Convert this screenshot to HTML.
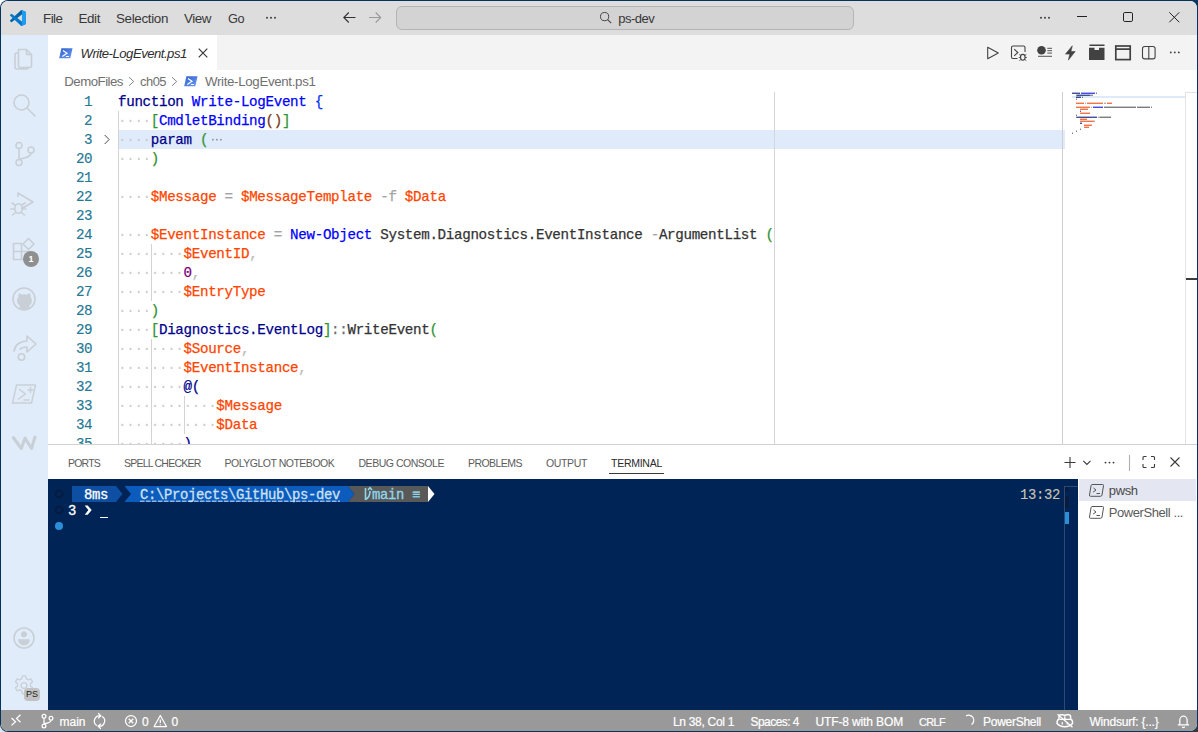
<!DOCTYPE html>
<html>
<head>
<meta charset="utf-8">
<title>Write-LogEvent.ps1 - ps-dev - Visual Studio Code</title>
<style>
*{box-sizing:border-box;margin:0;padding:0}
html,body{width:1198px;height:732px;overflow:hidden;background:#0a365f;font-family:"Liberation Sans",sans-serif;}
.corner{position:absolute;width:9px;height:9px}
#win{position:absolute;left:0;top:0;width:1198px;height:732px;background:#04335c;border-radius:8px;overflow:hidden}
#inner{position:absolute;left:1px;top:1px;width:1196px;height:730px;border-radius:7px;overflow:hidden;background:#fff}
.abs{position:absolute}
svg{position:absolute;overflow:visible}
.tx{position:absolute;line-height:20px;white-space:nowrap}
/* title bar */
#title{left:0;top:0;width:1196px;height:34px;background:#dddddd}
#search{left:395px;top:5px;width:458px;height:24px;border:1px solid #b4b4b4;border-radius:6px;background:#d3d3d3}
/* activity bar */
#act{left:0;top:34px;width:47px;height:675px;background:#e0ecf9}
/* tabs */
#tabs{left:47px;top:34px;width:1149px;height:35px;background:#f3f3f3}
#tab{left:0;top:0;width:169px;height:35px;background:#fff}
#crumbs{left:47px;top:69px;width:1149px;height:22px;background:#fff}
/* editor */
#ed{left:47px;top:91px;width:1149px;height:352px;background:#fff;overflow:hidden}
.ln{position:absolute;left:0;width:1149px;height:19px;font-family:"Liberation Mono",monospace;font-size:14.2px;letter-spacing:-0.32px;line-height:19px;padding-top:0.5px;white-space:pre;color:#1f1f1f;-webkit-text-stroke:0.25px currentColor}
.no{position:absolute;left:0;width:44.3px;text-align:right;color:#237893;-webkit-text-stroke:0.15px currentColor}
.cd{position:absolute;left:70px}
.k{color:#00008b}.f{color:#0000ff}.v{color:#ff4500}.b1{color:#0431fa}.b2{color:#319331}.b3{color:#7b3814}.t{color:#00008b}.o{color:#a4a4a4}.o2{color:#707070}.c{color:#bcbcbc}.n{color:#800080}.p{color:#333}
.guide{width:1px;background:#d3d3d3}
.fold{color:#777;-webkit-text-stroke:0}
.ws{color:#cacaca;-webkit-text-stroke:0}
/* panel */
#panel{left:47px;top:443px;width:1149px;height:266px;background:#fff;border-top:1px solid #d2d2d2}
#term{left:0;top:34px;width:1030px;height:231px;background:#012456;overflow:hidden}
.tl{position:absolute;font-family:"Liberation Mono",monospace;font-size:13.9px;letter-spacing:-0.34px;line-height:16px;height:16px;padding-top:0.6px;white-space:pre;color:#f0f0f0;-webkit-text-stroke:0.3px currentColor}
#tlist{left:1030px;top:34px;width:119px;height:231px;background:#fff}
/* status */
#status{left:0;top:709px;width:1196px;height:21px;background:#999999}
</style>
</head>
<body>
<div class="corner" style="left:0;top:0;background:#fff"></div>
<div class="corner" style="left:0;bottom:0;background:#dfe6ee"></div>
<div class="corner" style="right:0;bottom:0;background:#3a3a3a"></div>
<div id="win"><div id="inner">
<!-- ================= TITLE BAR ================= -->
<div id="title" class="abs">
  <!-- vscode logo -->
  <svg style="left:9px;top:9px" width="16" height="16" viewBox="0 0 100 100">
    <path d="M96.46 10.8 75.86.9a6.23 6.23 0 0 0-7.1 1.2L1.34 63.6a4.17 4.17 0 0 0 0 6.16l5.5 5a4.17 4.17 0 0 0 5.33.24L93.4 13.4a4.14 4.14 0 0 1 6.6 3.3v-.24a6.25 6.25 0 0 0-3.54-5.64z" fill="#0065a9"/>
    <path d="M96.46 89.2 75.86 99.1a6.23 6.23 0 0 1-7.1-1.2L1.34 36.4a4.17 4.17 0 0 1 0-6.16l5.5-5a4.17 4.17 0 0 1 5.33-.24L93.4 86.6a4.14 4.14 0 0 0 6.6-3.3v.24a6.25 6.25 0 0 1-3.54 5.64z" fill="#007acc"/>
    <path d="M75.86 99.1a6.23 6.23 0 0 1-7.1-1.2c2.3 2.3 6.25.67 6.25-2.6V4.7c0-3.26-3.95-4.9-6.26-2.6a6.23 6.23 0 0 1 7.1-1.2l20.6 9.9A6.25 6.25 0 0 1 100 16.44v67.12a6.25 6.25 0 0 1-3.54 5.63z" fill="#1f9cf0"/>
  </svg>
  <!-- menu overflow dots -->
  <svg style="left:0;top:0" width="1196" height="34" viewBox="0 0 1196 34">
    <g fill="#333"><circle cx="266" cy="16.7" r="0.95"/><circle cx="270" cy="16.7" r="0.95"/><circle cx="274" cy="16.7" r="0.95"/></g>
    <!-- nav arrows -->
    <path d="M354.5 16.5H343M347.8 11.5l-5 5 5 5" fill="none" stroke="#333" stroke-width="1.1"/>
    <path d="M368 16.5h11.5M374.7 11.5l5 5-5 5" fill="none" stroke="#9a9a9a" stroke-width="1.1"/>
    <!-- window controls -->
    <g fill="#333"><circle cx="1040" cy="16.8" r="0.95"/><circle cx="1044" cy="16.8" r="0.95"/><circle cx="1048" cy="16.8" r="0.95"/></g>
    <path d="M1076 15.5h10" stroke="#222" stroke-width="1" fill="none"/>
    <rect x="1122.5" y="11.5" width="9" height="9" rx="1.3" fill="none" stroke="#222" stroke-width="1"/>
    <path d="M1168.3 11.3l10 10M1178.3 11.3l-10 10" stroke="#222" stroke-width="1" fill="none"/>
  </svg>
  <div id="search" class="abs"></div>
  <svg style="left:598px;top:10px" width="13" height="13" viewBox="0 0 13 13"><circle cx="5.6" cy="5.6" r="4.1" fill="none" stroke="#444" stroke-width="1"/><path d="M8.6 8.6l3.6 3.6" stroke="#444" stroke-width="1.1"/></svg>
</div>

<!-- ================= ACTIVITY BAR ================= -->
<div id="act" class="abs">
<svg style="left:0;top:0" width="47" height="675" viewBox="0 0 47 675" fill="none" stroke="#c9cfd6" stroke-width="1.6" stroke-linejoin="round" stroke-linecap="round">
  <!-- files (y center 59-35=24) -->
  <path d="M17.5 14.5h8l5 5v11.5a1.5 1.5 0 0 1-1.5 1.5h-10a1.5 1.5 0 0 1-1.5-1.5z M25.5 14.5v5h5 M17.5 18h-2a1.5 1.5 0 0 0-1.5 1.5v13a1.5 1.5 0 0 0 1.5 1.5h10a1.5 1.5 0 0 0 1.5-1.5v-0.5"/>
  <!-- search (y center 106-35=71) -->
  <circle cx="20.5" cy="67.5" r="7.5"/><path d="M26 73l8 8"/>
  <!-- scm (y center 154-35=119) -->
  <circle cx="18" cy="110.5" r="3"/><circle cx="18" cy="127.5" r="3"/><circle cx="30" cy="115" r="3"/><path d="M18 113.5v11 M30 118c0 4-6 5-12 6.500"/>
  <!-- debug (y center 203-35=168) -->
  <path d="M17 161.500v-3.500l15 9-11 6.500"/><ellipse cx="17.500" cy="173.500" rx="3.700" ry="4.800"/><path d="M14 170l-3-2 M21 170l3-2 M13.500 174h-3.500 M21.500 174h3.500 M14.500 177.500l-3 2.500 M20.500 177.500l3 2.500"/>
  <!-- extensions (y center 251-35=216) -->
  <path d="M12.500 208.500h8v16h-8z M12.500 216.500h16v8h-16 M28.500 216.500v8"/><path d="M27.500 203.500l5.500 5.500-5.500 5.500-5.500-5.500z"/>
  <!-- github (y center 299-35=264) -->
  <circle cx="23" cy="264" r="11"/>
  <path d="M19 274v-3.500c-1.500-1-2.500-2.500-2.500-5 0-1.500.5-2.700 1.300-3.600-.2-1 0-2.400.400-3.200 1.200.1 2.300.7 3.100 1.300a9 9 0 0 1 4.400 0c.8-.6 1.900-1.200 3.100-1.300.4.800.6 2.200.4 3.200.8.900 1.300 2.100 1.300 3.600 0 2.500-1 4-2.500 5v3.500z" fill="#c9cfd6" stroke-width="0.8"/>
  <!-- live share (y center 346-35=311) -->
  <path d="M13 316c1-6 6-10 13-10v-5l9 8-9 8v-5c-3 0-5 .5-7 2"/><circle cx="20.500" cy="322" r="3.200"/>
  <!-- powershell (y center 394-35=359) -->
  <path d="M15.500 350h19l-4 18h-19z" stroke-width="1.400"/><path d="M18.500 354.500l6 4.500-7 5 M23 365h5 M29.500 352.500v5 M27 355h5" stroke-width="1.400"/>
  <!-- windsurf W (y center 442-35=407) -->
  <path d="M12.300 402.500l8 11 3.700-10.500 6.500 10.500 3.500-11.500" stroke-width="3"/>
  <!-- account (y center 638-35=603) -->
  <circle cx="23" cy="603" r="10"/><circle cx="23" cy="599.300" r="2.600" fill="#c9cfd6" stroke-width="1"/><path d="M17.800 604.800h10.400c0 3.500-2.300 5.200-5.200 5.200s-5.200-1.700-5.200-5.200z" fill="#c9cfd6" stroke-width="1"/>
  <!-- settings gear (y center 685-35=650) -->
  <g transform="translate(23 650.500) scale(0.83) translate(-22 -650)"><circle cx="22" cy="650" r="3.500"/>
  <path d="M20 638.500h4l.7 3.300 2.400 1.400 3.200-1.100 2 3.500-2.500 2.200v2.800l2.500 2.200-2 3.500-3.200-1.100-2.400 1.400-.7 3.300h-4l-.7-3.300-2.400-1.400-3.200 1.100-2-3.500 2.500-2.200v-2.800l-2.500-2.200 2-3.500 3.200 1.100 2.400-1.400z"/></g>
</svg>
  <!-- extension badge -->
  <div class="abs" style="left:22px;top:216px;width:16px;height:16px;border-radius:8px;background:#8f8f8f;color:#fff;font-size:9px;line-height:16px;text-align:center;font-weight:bold">1</div>
  <!-- PS profile badge -->
  <div class="abs" style="left:23px;top:653px;width:16px;height:13px;border-radius:4px;background:#c2c2c2;color:#222;font-size:9px;line-height:13px;text-align:center">PS</div>
</div>

<!-- ================= TABS ================= -->
<div id="tabs" class="abs">
  <div id="tab" class="abs">
    <svg style="left:11px;top:12.5px" width="14" height="10.5" viewBox="0 0 15 11" preserveAspectRatio="none"><defs><linearGradient id="psg" x1="0" y1="0" x2="1" y2="1"><stop offset="0" stop-color="#2e5fcf"/><stop offset="1" stop-color="#6c9bef"/></linearGradient></defs><path d="M2.600 0.300h11.900l-2.400 10.400h-11.900z" fill="url(#psg)"/><path d="M4.200 2.600l4.300 2.900-5 3.300" fill="none" stroke="#fff" stroke-width="1.300"/><path d="M7.300 9h3.400" stroke="#fff" stroke-width="1.100"/></svg>
    <svg style="left:150px;top:13px" width="10" height="10" viewBox="0 0 10 10"><path d="M0.700 0.700l8.600 8.600M9.300 0.700l-8.600 8.600" stroke="#333" stroke-width="1.100" fill="none"/></svg>
  </div>
  <!-- editor actions -->
  <svg style="left:0;top:0" width="1149" height="35" viewBox="48 35 1149 35" fill="none" stroke="#424242" stroke-width="1.100">
    <!-- run -->
    <path d="M987.700 47.300v11.400l10.600-5.700z" stroke-linejoin="round"/>
    <!-- debug terminal -->
    <path d="M1017.500 58.500h-4.500a1.500 1.500 0 0 1-1.500-1.500v-9.500a1.500 1.500 0 0 1 1.500-1.500h10.500a1.500 1.500 0 0 1 1.500 1.500v4.500"/>
    <path d="M1014.200 49.200l3.600 3.300-3.600 3.300"/>
    <ellipse cx="1022.800" cy="57.300" rx="2.300" ry="2.900"/><path d="M1019.300 54.500l1.500 1 M1026.300 54.500l-1.500 1 M1018.800 57.500h1.700 M1026.800 57.500h-1.700 M1019.300 60.500l1.500-1 M1026.300 60.500l-1.500-1" stroke-width="0.900"/>
    <!-- circle + lines -->
    <circle cx="1041.500" cy="50.300" r="4.300" fill="#424242" stroke="none"/><path d="M1047.300 48.300h4.700 M1047.300 50.700h4.700 M1047.300 53.100h4.700 M1038 56.300h14" stroke-width="0.9"/>
    <!-- lightning -->
    <path d="M1072.300 45.800l-6.800 8.300h4.300l-1.400 6 6.800-8.600h-4.300z" fill="#424242" stroke-width="0.600"/>
    <!-- filled archive box -->
    <path d="M1089.500 45.300h15" stroke-width="1.600"/><path d="M1089 47.800h5.500v2.200h4.500v-2.200h5.500v12.200h-15.500z" fill="#424242" stroke="none"/>
    <!-- window -->
    <rect x="1115.800" y="46" width="14.400" height="13.600" stroke-width="1.700"/><path d="M1115.800 49.200h14.400" stroke-width="1.800"/>
    <!-- split -->
    <rect x="1142.500" y="46.500" width="12.600" height="12.400" rx="2.200"/><path d="M1148.800 46.500v12.400"/>
    <!-- more -->
    <g fill="#424242" stroke="none"><circle cx="1170.800" cy="52.400" r="0.950"/><circle cx="1174.800" cy="52.400" r="0.950"/><circle cx="1178.800" cy="52.400" r="0.950"/></g>
  </svg>
</div>
<div id="crumbs" class="abs">
  <svg style="left:0;top:0" width="1149" height="22" viewBox="48 70 1149 22" fill="none" stroke="#858585" stroke-width="1">
    <path d="M129 77.200l4.700 4.300-4.700 4.300 M172 77.200l4.700 4.300-4.700 4.300"/>
  </svg>
  <svg style="left:136px;top:6px" width="14" height="10.5" viewBox="0 0 15 11" preserveAspectRatio="none"><path d="M2.600 0.300h11.900l-2.400 10.400h-11.900z" fill="url(#psg)"/><path d="M4.200 2.600l4.300 2.900-5 3.300" fill="none" stroke="#fff" stroke-width="1.300"/><path d="M7.300 9h3.400" stroke="#fff" stroke-width="1.100"/></svg>
</div>
<!-- ================= EDITOR ================= -->
<div id="ed" class="abs">
<div class="abs" style="left:70px;top:38px;width:947px;height:19px;background:#dfebfa"></div>
<div class="abs guide" style="left:70px;top:19px;height:340px"></div>
<div class="abs guide" style="left:103px;top:152px;height:57px"></div>
<div class="abs guide" style="left:103px;top:247px;height:110px"></div>
<div class="abs guide" style="left:136px;top:304px;height:38px"></div>
<div class="abs" style="left:726px;top:0;width:1px;height:352px;background:#d6d6d6"></div>
<svg style="left:54px;top:42px" width="10" height="11" viewBox="0 0 10 11"><path d="M2.700 1l4.400 4.500-4.400 4.500" fill="none" stroke="#4a4a4a" stroke-width="1"/></svg>
<svg style="left:0;top:0" width="200" height="60" viewBox="0 0 200 60"><g fill="#8c8c8c"><circle cx="164.9" cy="47.7" r="0.85"/><circle cx="168.9" cy="47.7" r="0.85"/><circle cx="172.9" cy="47.7" r="0.85"/></g></svg>
<div class="ln" style="top:0px"><span class="no">1</span><span class="cd"><span class="k">function</span> <span class="f">Write-LogEvent</span> <span class="b1">{</span></span></div>
<div class="ln" style="top:19px"><span class="no">2</span><span class="cd"><span class="ws">····</span><span class="b2">[</span><span class="f">CmdletBinding</span><span class="b3">()</span><span class="b2">]</span></span></div>
<div class="ln hl" style="top:38px"><span class="no">3</span><span class="cd"><span class="ws">····</span><span class="k">param</span> <span class="b2">(</span></span></div>
<div class="ln" style="top:57px"><span class="no">20</span><span class="cd"><span class="ws">····</span><span class="b2">)</span></span></div>
<div class="ln" style="top:76px"><span class="no">21</span><span class="cd"></span></div>
<div class="ln" style="top:95px"><span class="no">22</span><span class="cd"><span class="ws">····</span><span class="v">$Message</span> <span class="o">=</span> <span class="v">$MessageTemplate</span> <span class="o">-f</span> <span class="v">$Data</span></span></div>
<div class="ln" style="top:114px"><span class="no">23</span><span class="cd"></span></div>
<div class="ln" style="top:133px"><span class="no">24</span><span class="cd"><span class="ws">····</span><span class="v">$EventInstance</span> <span class="o">=</span> <span class="f">New-Object</span> <span class="p">System.Diagnostics.EventInstance</span> <span class="o">-</span><span class="p">ArgumentList</span> <span class="b2">(</span></span></div>
<div class="ln" style="top:152px"><span class="no">25</span><span class="cd"><span class="ws">········</span><span class="v">$EventID</span><span class="c">,</span></span></div>
<div class="ln" style="top:171px"><span class="no">26</span><span class="cd"><span class="ws">········</span><span class="n">0</span><span class="c">,</span></span></div>
<div class="ln" style="top:190px"><span class="no">27</span><span class="cd"><span class="ws">········</span><span class="v">$EntryType</span></span></div>
<div class="ln" style="top:209px"><span class="no">28</span><span class="cd"><span class="ws">····</span><span class="b2">)</span></span></div>
<div class="ln" style="top:228px"><span class="no">29</span><span class="cd"><span class="ws">····</span><span class="b2">[</span><span class="t">Diagnostics.EventLog</span><span class="b2">]</span><span class="o2">::</span><span class="p">WriteEvent</span><span class="b2">(</span></span></div>
<div class="ln" style="top:247px"><span class="no">30</span><span class="cd"><span class="ws">········</span><span class="v">$Source</span><span class="c">,</span></span></div>
<div class="ln" style="top:266px"><span class="no">31</span><span class="cd"><span class="ws">········</span><span class="v">$EventInstance</span><span class="c">,</span></span></div>
<div class="ln" style="top:285px"><span class="no">32</span><span class="cd"><span class="ws">········</span><span class="k">@(</span></span></div>
<div class="ln" style="top:304px"><span class="no">33</span><span class="cd"><span class="ws">············</span><span class="v">$Message</span></span></div>
<div class="ln" style="top:323px"><span class="no">34</span><span class="cd"><span class="ws">············</span><span class="v">$Data</span></span></div>
<div class="ln" style="top:342px"><span class="no">35</span><span class="cd"><span class="ws">········</span><span class="k">)</span></span></div>
<!-- minimap -->
<div class="abs" style="left:1014px;top:0;width:1px;height:352px;background:#cfcfcf"></div>
<div class="abs" style="left:1017px;top:0;width:120px;height:352px;background:#fff"></div>
<div class="abs" style="left:1024px;top:4px;width:113px;height:2px;background:#dfeaf8"></div>
<svg style="left:1024px;top:0" width="100" height="50" viewBox="0 0 100 50">
  <g opacity="0.8">
  <rect x="0" y="0.600" width="8" height="1.350" fill="#0a1a7a"/><rect x="9" y="0.600" width="14" height="1.350" fill="#0a14f0"/><rect x="24" y="0.600" width="1" height="1.350" fill="#555"/>
  <rect x="4" y="2.600" width="1" height="1.350" fill="#319331"/><rect x="5" y="2.600" width="13" height="1.350" fill="#0a1a7a"/><rect x="18" y="2.600" width="3" height="1.350" fill="#777"/>
  <rect x="4" y="4.600" width="5" height="1.350" fill="#0a1a7a"/><rect x="10" y="4.600" width="1" height="1.350" fill="#555"/>
  <rect x="4" y="6.600" width="1" height="1.350" fill="#555"/>
  <rect x="4" y="10.600" width="8" height="1.350" fill="#f04a14"/><rect x="13" y="10.600" width="1" height="1.350" fill="#999"/><rect x="15" y="10.600" width="16" height="1.350" fill="#f04a14"/><rect x="32" y="10.600" width="2" height="1.350" fill="#999"/><rect x="35" y="10.600" width="5" height="1.350" fill="#f04a14"/>
  <rect x="4" y="14.600" width="14" height="1.350" fill="#f04a14"/><rect x="19" y="14.600" width="1" height="1.350" fill="#999"/><rect x="21" y="14.600" width="10" height="1.350" fill="#0a14f0"/><rect x="32" y="14.600" width="32" height="1.350" fill="#555"/><rect x="65" y="14.600" width="13" height="1.350" fill="#555"/><rect x="79" y="14.600" width="1" height="1.350" fill="#555"/>
  <rect x="8" y="16.600" width="8" height="1.350" fill="#f04a14"/>
  <rect x="8" y="18.600" width="1" height="1.350" fill="#7a0a7a"/>
  <rect x="8" y="20.600" width="10" height="1.350" fill="#f04a14"/>
  <rect x="4" y="22.600" width="1" height="1.350" fill="#555"/>
  <rect x="4" y="24.600" width="1" height="1.350" fill="#555"/><rect x="5" y="24.600" width="20" height="1.350" fill="#0a1a7a"/><rect x="26" y="24.600" width="2" height="1.350" fill="#999"/><rect x="28" y="24.600" width="11" height="1.350" fill="#555"/>
  <rect x="8" y="26.600" width="7" height="1.350" fill="#f04a14"/>
  <rect x="8" y="28.600" width="14" height="1.350" fill="#f04a14"/><rect x="22" y="28.600" width="1" height="1.350" fill="#999"/>
  <rect x="8" y="30.600" width="2" height="1.350" fill="#0a1a7a"/>
  <rect x="12" y="32.600" width="8" height="1.350" fill="#f04a14"/>
  <rect x="12" y="34.600" width="5" height="1.350" fill="#f04a14"/>
  <rect x="8" y="36.600" width="1" height="1.350" fill="#555"/>
  <rect x="4" y="38.600" width="1" height="1.350" fill="#555"/>
  <rect x="0" y="40.600" width="1" height="1.350" fill="#555"/>
  </g>
</svg>
<!-- overview ruler -->
<div class="abs" style="left:1137px;top:0;width:12px;height:352px;background:#fff;border-left:1px solid #e3e3e3;border-top:1px solid #e3e3e3"></div>
<div class="abs" style="left:1138px;top:186px;width:11px;height:2px;background:#3c3c3c"></div>
</div>
<!-- ================= PANEL ================= -->
<div id="panel" class="abs">
  <div class="abs" style="left:561px;top:28px;width:55px;height:1px;background:#3a3a3a"></div>
  <svg style="left:0;top:0" width="1149" height="35" viewBox="48 445 1149 35" fill="none" stroke="#3a3a3a" stroke-width="1.100">
    <path d="M1064.500 462.500h11M1070 457v11"/>
    <path d="M1083.300 460.800l3.600 3.600 3.600-3.600"/>
    <g fill="#3a3a3a" stroke="none"><circle cx="1105.500" cy="462.600" r="0.950"/><circle cx="1109.500" cy="462.600" r="0.950"/><circle cx="1113.500" cy="462.600" r="0.950"/></g>
    <path d="M1129.500 455v16" stroke="#b0b0b0"/>
    <path d="M1143 460v-2.500a1 1 0 0 1 1-1h2.500 M1151 456.500h2.500a1 1 0 0 1 1 1v2.500 M1154.500 464v2.500a1 1 0 0 1-1 1h-2.500 M1146.500 467.500h-2.500a1 1 0 0 1-1-1v-2.500"/>
    <path d="M1170.500 457.500l9 9M1179.500 457.500l-9 9"/>
  </svg>
  <div id="term" class="abs">
    <!-- gutter decorations -->
    <svg style="left:0;top:0" width="30" height="60" viewBox="0 0 30 60"><circle cx="11" cy="15" r="3.500" fill="none" stroke="#08193a" stroke-width="1.700"/><circle cx="11" cy="31" r="3.500" fill="none" stroke="#08193a" stroke-width="1.700"/><circle cx="11" cy="47" r="4" fill="#2a8fd8"/></svg>
    <!-- prompt line 1: y 486..502 abs => 486-479=7 -->
    <svg style="left:0;top:7px" width="420" height="16" viewBox="48 0 420 16">
      <path d="M72 0h44l6.500 8-6.500 8h-44z" fill="#0d4fa3"/>
      <path d="M124.500 0h223.500l6.500 8-6.500 8h-223.500l6.500-8z" fill="#0b5cbc"/>
      <path d="M348 0h80v16h-80l6.500-8z" fill="#595959"/>
      <path d="M428 0l6.500 8-6.500 8z" fill="#ffffff"/>
      <!-- git branch glyph -->
      <path d="M365.500 2v12 M365.500 13.500c3-1.500 4.500-4 4.500-8.500 M368 4l2-2.300 2 2.300" fill="none" stroke="#8fd6ea" stroke-width="1.600"/>
      <!-- dashed underline -->
      <path d="M140 15.200h200" stroke="#cfe0f2" stroke-width="1" stroke-dasharray="4.500 1.500" fill="none"/>
    </svg>
    <div class="tl" style="left:36px;top:7px;color:#ffffff">8ms</div>
    <div class="tl" style="left:92px;top:7px;color:#cfe0f2">C:\Projects\GitHub\ps-dev</div>
    <div class="tl" style="left:324px;top:7px;color:#8fd6ea">main ≡</div>
    <div class="tl" style="left:20px;top:23px;color:#ffffff">3</div>
    <svg style="left:36px;top:25px" width="9" height="12" viewBox="0 0 9 12"><path d="M0.700 1.500h3l4 4.600-4 4.600h-3l3.700-4.600z" fill="#fff"/></svg>
    <div class="abs" style="left:52px;top:38px;width:8px;height:1px;background:#fff"></div>
    <div class="tl" style="left:972px;top:7px;color:#c9c7b4;-webkit-text-stroke:0.100px currentColor">13:32</div>
    <!-- scrollbar / overview -->
    <div class="abs" style="left:1016px;top:7px;width:14px;height:224px;border-left:1px solid #2c4a74;border-top:1px solid #2c4a74"></div>
    <div class="abs" style="left:1017px;top:8px;width:4px;height:5px;background:#0a1c3e"></div>
    <div class="abs" style="left:1017px;top:17px;width:4px;height:12px;background:#0a1c3e"></div>
    <div class="abs" style="left:1017px;top:33px;width:4px;height:12px;background:#2a8fd8"></div>
  </div>
  <div id="tlist" class="abs">
    <div class="abs" style="left:1px;top:0;width:117px;height:22px;background:#e4e6f1"></div>
    <svg style="left:0;top:0" width="119" height="50" viewBox="1078 479 119 50" fill="none" stroke="#555" stroke-width="1">
      <path d="M1092 484.500h10.500a1 1 0 0 1 1 1.200l-1.500 9.300a1.500 1.500 0 0 1-1.500 1.300h-10a1 1 0 0 1-1-1.200l1.500-9.300a1.500 1.500 0 0 1 1.500-1.300z"/>
      <path d="M1093.500 488l2.500 2-3 2.200 M1096.500 493.500h3.500"/>
      <path d="M1092 506.500h10.500a1 1 0 0 1 1 1.200l-1.500 9.300a1.500 1.500 0 0 1-1.500 1.300h-10a1 1 0 0 1-1-1.200l1.500-9.300a1.500 1.500 0 0 1 1.500-1.300z"/>
      <path d="M1093.500 510l2.500 2-3 2.200 M1096.500 515.500h3.500"/>
    </svg>
  </div>
</div>
<!-- ================= STATUS BAR ================= -->
<div id="status" class="abs">
  <svg style="left:0;top:0" width="1196" height="21" viewBox="1 710 1196 21" fill="none" stroke="#fff" stroke-width="1.25">
    <!-- remote -->
    <path d="M11.500 718l4 3.700-4 3.700 M20.500 714.800l-4 3.700 4 3.700"/>
    <!-- branch -->
    <circle cx="44" cy="716.300" r="1.900"/><circle cx="44" cy="726" r="1.900"/><circle cx="51" cy="718.300" r="1.900"/><path d="M44 718.200v5.900 M51 720.200c0 2.500-3.500 3-7 3.600"/>
    <!-- sync -->
    <path d="M96.9 725.5a5.2 5.2 0 0 1 3.5-9.6 M102.1 716.5a5.2 5.2 0 0 1-3.5 9.6 M98.2 713.3l2.7 2.6-2.9 2.5 M100.8 728.7l-2.7-2.6 2.9-2.5"/>
    <!-- error -->
    <circle cx="131" cy="721" r="5.500"/><path d="M128.700 718.700l4.600 4.600M133.300 718.700l-4.600 4.600"/>
    <!-- warning -->
    <path d="M160.300 715.500l6.200 11h-12.400z" stroke-linejoin="round"/><path d="M160.300 719.500v3.500 M160.300 724.300v1"/>
    <!-- spinner -->
    <path d="M966 716a5 5 0 0 1 5.500 8.500" stroke-width="1.200"/>
    <!-- copilot-ish -->
    <path d="M1059 719v-2.200a2 2 0 0 1 2-2h1.800a2 2 0 0 1 2 1.600a2 2 0 0 1 2-1.600h1.800a2 2 0 0 1 2 2v2.200c1.200.600 1.900 1.500 1.900 2.700v1.800c-1.700 2.100-4.700 3.200-7.700 3.200s-6-1.100-7.700-3.200v-1.800c0-1.200.700-2.100 1.900-2.700z" stroke-width="1.500"/><path d="M1059.300 719.300h4.500a1 1 0 0 0 1-1v-1.500 M1070.300 719.300h-4.500a1 1 0 0 1-1-1 M1062.300 722.300v2.200 M1067.300 722.300v2.200" stroke-width="1.300"/><path d="M1057.500 714.300l15 13" stroke-width="1.300"/>
    <!-- bell -->
    <path d="M1179.800 724.600v-4.700a3.650 3.650 0 0 1 7.300 0v4.700 M1177.800 724.800h11.300 M1182.200 726.600a1.300 1.300 0 0 0 2.500 0"/>
  </svg>
</div>

<!-- ================= TEXT LABELS ================= -->
<span id="m_file" class="tx" style="left:42.0px;top:7.6px;font-size:13.35px;color:#383838;letter-spacing:-0.500px;">File</span>
<span id="m_edit" class="tx" style="left:77.5px;top:7.6px;font-size:13.4px;color:#383838;letter-spacing:-0.395px;">Edit</span>
<span id="m_sel" class="tx" style="left:115.0px;top:7.6px;font-size:13.4px;color:#383838;letter-spacing:-0.344px;">Selection</span>
<span id="m_view" class="tx" style="left:183.0px;top:7.6px;font-size:13.4px;color:#383838;letter-spacing:-0.449px;">View</span>
<span id="m_go" class="tx" style="left:227.0px;top:7.6px;font-size:12.74px;color:#383838;letter-spacing:-0.500px;">Go</span>
<span id="m_search" class="tx" style="left:617.3px;top:7.6px;font-size:13.0px;color:#383838;letter-spacing:-0.500px;">ps-dev</span>
<span id="tab_t" class="tx" style="left:79.5px;top:42.5px;font-size:13.14px;color:#2e2e2e;letter-spacing:-0.500px;font-style:italic;">Write-LogEvent.ps1</span>
<span id="bc1" class="tx" style="left:63.3px;top:70.7px;font-size:13.23px;color:#707070;letter-spacing:-0.500px;">DemoFiles</span>
<span id="bc2" class="tx" style="left:139.0px;top:70.7px;font-size:12.91px;color:#707070;letter-spacing:-0.500px;">ch05</span>
<span id="bc3" class="tx" style="left:204.0px;top:70.7px;font-size:13.3px;color:#707070;letter-spacing:-0.335px;">Write-LogEvent.ps1</span>
<span id="p1" class="tx" style="left:67.0px;top:452.0px;font-size:10.52px;color:#5c5c5c;letter-spacing:-0.812px;">PORTS</span>
<span id="p2" class="tx" style="left:123.0px;top:452.0px;font-size:10.52px;color:#5c5c5c;letter-spacing:-0.787px;">SPELL CHECKER</span>
<span id="p3" class="tx" style="left:223.5px;top:452.0px;font-size:10.52px;color:#5c5c5c;letter-spacing:-0.499px;">POLYGLOT NOTEBOOK</span>
<span id="p4" class="tx" style="left:357.5px;top:452.0px;font-size:10.52px;color:#5c5c5c;letter-spacing:-0.483px;">DEBUG CONSOLE</span>
<span id="p5" class="tx" style="left:467.0px;top:452.0px;font-size:10.52px;color:#5c5c5c;letter-spacing:-0.559px;">PROBLEMS</span>
<span id="p6" class="tx" style="left:545.0px;top:452.0px;font-size:10.52px;color:#5c5c5c;letter-spacing:-0.377px;">OUTPUT</span>
<span id="p7" class="tx" style="left:610.0px;top:452.0px;font-size:10.52px;color:#2b2b2b;letter-spacing:-0.275px;">TERMINAL</span>
<span id="tl1" class="tx" style="left:1107.8px;top:479.5px;font-size:13.0px;color:#4a4a4a;letter-spacing:-0.365px;">pwsh</span>
<span id="tl2" class="tx" style="left:1107.8px;top:501.5px;font-size:13.0px;color:#5a5a5a;letter-spacing:-0.429px;">PowerShell ...</span>
<span id="s_main" class="tx" style="left:58.5px;top:710.7px;font-size:12.0px;color:#ffffff;letter-spacing:-0.004px;-webkit-text-stroke:0.2px #fff;">main</span>
<span id="s_e0" class="tx" style="left:141.0px;top:710.7px;font-size:12.0px;color:#ffffff;letter-spacing:-0.188px;-webkit-text-stroke:0.2px #fff;">0</span>
<span id="s_w0" class="tx" style="left:170.5px;top:710.7px;font-size:12.0px;color:#ffffff;letter-spacing:-0.188px;-webkit-text-stroke:0.2px #fff;">0</span>
<span id="s_ln" class="tx" style="left:672.0px;top:710.7px;font-size:12.0px;color:#ffffff;letter-spacing:-0.310px;-webkit-text-stroke:0.2px #fff;">Ln 38, Col 1</span>
<span id="s_sp" class="tx" style="left:749.5px;top:710.7px;font-size:11.92px;color:#ffffff;letter-spacing:-0.500px;-webkit-text-stroke:0.2px #fff;">Spaces: 4</span>
<span id="s_utf" class="tx" style="left:814.5px;top:710.7px;font-size:12.0px;color:#ffffff;letter-spacing:-0.132px;-webkit-text-stroke:0.2px #fff;">UTF-8 with BOM</span>
<span id="s_crlf" class="tx" style="left:918.0px;top:710.7px;font-size:10.92px;color:#ffffff;letter-spacing:-0.631px;-webkit-text-stroke:0.2px #fff;">CRLF</span>
<span id="s_ps" class="tx" style="left:982.0px;top:710.7px;font-size:12.0px;color:#ffffff;letter-spacing:-0.270px;-webkit-text-stroke:0.2px #fff;">PowerShell</span>
<span id="s_ws" class="tx" style="left:1088.5px;top:710.7px;font-size:12.0px;color:#ffffff;letter-spacing:-0.202px;-webkit-text-stroke:0.2px #fff;">Windsurf: {...}</span>
</div></div>
</body>
</html>
